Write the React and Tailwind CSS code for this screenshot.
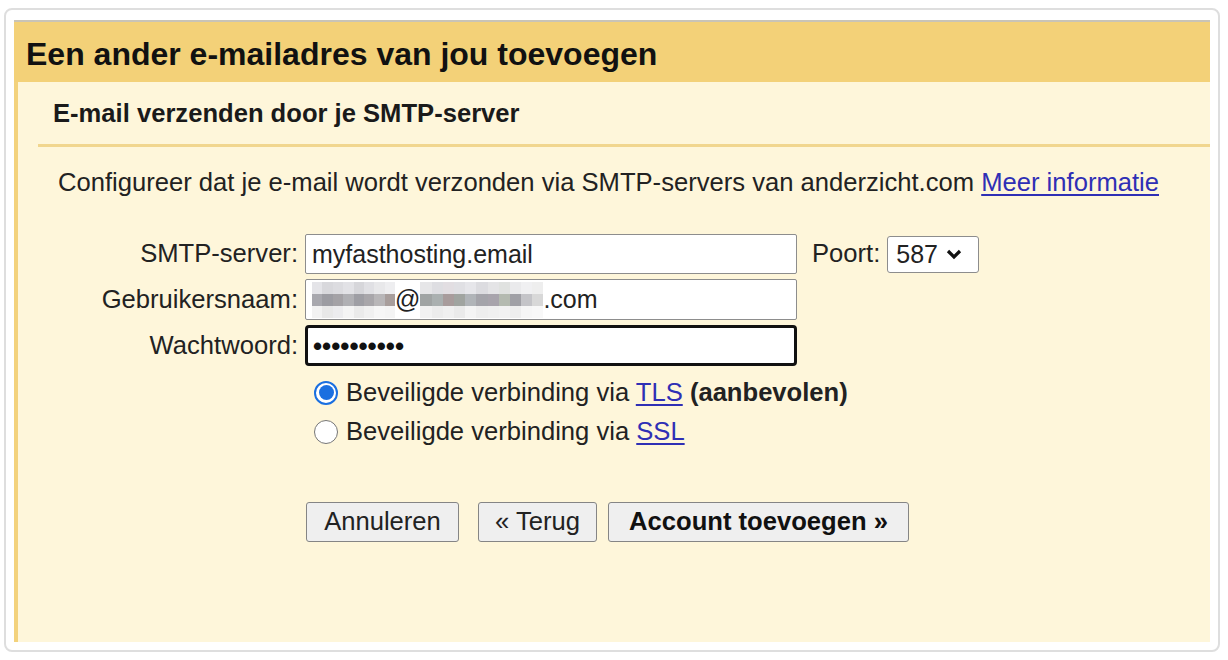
export default function App() {
  const mosaicA = [
    ["#e4e4e8", "#d8d8dc", "#dcdce0", "#e2e2e6", "#d6d6da", "#e0e0e4", "#e8e8ea", "#eeeef0"],
    ["#a8a8ae", "#9c9ca2", "#a4a2a6", "#b0b0b4", "#9e9ea4", "#a8a6aa", "#b8b6b8", "#a89e9c"],
    ["#f2f2f2", "#e8e8e8", "#ececee", "#f4f4f4", "#eaeaea", "#f0f0f0", "#f6f6f6", "#f4f4f4"],
  ];
  const mosaicB = [
    ["#e6e6e8", "#dedee2", "#e2dee2", "#e0e0e4", "#e6e6ea", "#dcdce0", "#e4e4e6", "#e0e2e0", "#eaeaec", "#f0f0f2", "#eeeeee"],
    ["#a0a4a4", "#aab0b0", "#a89c9c", "#a0a4a0", "#b0b4b8", "#a4a4aa", "#a8a4ac", "#b4bab0", "#a0a0a6", "#c4c4c8", "#d8d8d8"],
    ["#f2f2f2", "#ececec", "#f0f0f0", "#eaeaea", "#f4f4f4", "#eeeeee", "#f0f0f0", "#f2f2f2", "#eeeeee", "#f6f6f6", "#f8f8f8"],
  ];
  const Mosaic = ({ rows, w }) => (
    <div className="flex flex-col self-end mb-[1px]" style={{ width: w }}>
      {rows.map((r, i) => (
        <div key={i} className="flex h-[12px]">
          {r.map((c, j) => (
            <div key={j} className="flex-1" style={{ backgroundColor: c }} />
          ))}
        </div>
      ))}
    </div>
  );

  return (
    <div className="w-[1228px] h-[660px] bg-white font-['Liberation_Sans',Arial,sans-serif] text-[#222] pt-[8px] pl-[4px]">
      <div className="w-[1216px] h-[644px] border-2 border-[#dedede] rounded-[8px] pt-[10px] pl-[8px] pr-[8px] pb-[8px]">
        <div className="flex flex-col h-full">
          <div className="h-[2px] bg-[#c9c4b6]" />
          <div className="h-[60px] bg-[#f3d178] flex items-center pl-[12px] pt-[3px]">
            <div className="text-[32px] font-bold leading-none text-[#111]">
              Een ander e-mailadres van jou toevoegen
            </div>
          </div>
          <div className="flex-1 flex">
            <div className="w-[4px] bg-[#f3d27c]" />
            <div className="flex-1 bg-[#fef6da] pl-[20px]">
              <div className="h-[62px] flex items-center pl-[15px] pt-[1px]">
                <div className="text-[25.6px] font-bold leading-none text-[#1a1a1a]">
                  E-mail verzenden door je SMTP-server
                </div>
              </div>
              <div className="h-[3px] bg-[#f1d68e]" />
              <div className="pl-[20px] mt-[20px] text-[25.6px] leading-[30px]">
                Configureer dat je e-mail wordt verzonden via SMTP-servers van anderzicht.com{" "}
                <span className="text-[#2f2fb5] underline underline-offset-[3px]">Meer informatie</span>
              </div>

              <div className="mt-[37px] grid grid-cols-[260px_492px_auto] gap-x-[7px] gap-y-[5px] text-[25.6px]">
                <div className="flex items-center justify-end h-[40px] leading-none">SMTP-server:</div>
                <div className="h-[40px] border-[1.5px] border-[#8d8d8d] rounded-[2px] bg-white flex items-center pl-[6px] text-[25px] leading-none">
                  myfasthosting.email
                </div>
                <div className="flex items-center h-[40px] pl-[8px] gap-[7px]">
                  <span className="leading-none">Poort:</span>
                  <div className="w-[92px] h-[37px] border-[1.5px] border-[#8d8d8d] rounded-[3px] bg-white flex items-center pl-[8px] gap-[7px] text-[25px] leading-none">
                    <span>587</span>
                    <svg width="18" height="12" viewBox="0 0 18 12">
                      <path d="M3 3 L9 9 L15 3" fill="none" stroke="#111" strokeWidth="3.2" strokeLinejoin="miter" />
                    </svg>
                  </div>
                </div>

                <div className="flex items-center justify-end h-[41px] leading-none">Gebruikersnaam:</div>
                <div className="h-[41px] border-[1.5px] border-[#8d8d8d] rounded-[2px] bg-white flex items-stretch pl-[6px] text-[25px] leading-none">
                  <Mosaic rows={mosaicA} w={83} />
                  <span className="self-center">@</span>
                  <Mosaic rows={mosaicB} w={123} />
                  <span className="self-center">.com</span>
                </div>
                <div />

                <div className="flex items-center justify-end h-[41px] leading-none">Wachtwoord:</div>
                <div className="h-[41px] border-[3px] border-[#111] rounded-[4px] bg-white flex items-center pl-[5px] text-[26px] leading-none font-bold text-[#111]">
                  ••••••••••
                </div>
                <div />

                <div />
                <div className="col-span-2 pl-[9px] mt-[2px] flex flex-col">
                  <div className="h-[39px] flex items-center gap-[8px]">
                    <div className="w-[24px] h-[24px] rounded-full border-[2px] border-[#1a6fe0] bg-white flex items-center justify-center">
                      <div className="w-[15px] h-[15px] rounded-full bg-[#1a6fe0]" />
                    </div>
                    <span className="leading-none">
                      Beveiligde verbinding via{" "}
                      <span className="text-[#2f2fb5] underline underline-offset-[3px]">TLS</span>{" "}
                      <span className="font-bold">(aanbevolen)</span>
                    </span>
                  </div>
                  <div className="h-[39px] flex items-center gap-[8px]">
                    <div className="w-[24px] h-[24px] rounded-full border-[1.5px] border-[#767676] bg-white" />
                    <span className="leading-none">
                      Beveiligde verbinding via{" "}
                      <span className="text-[#2f2fb5] underline underline-offset-[3px]">SSL</span>
                    </span>
                  </div>
                </div>

                <div />
                <div className="col-span-2 mt-[46px] flex pl-[1px]">
                  <div className="w-[153px] h-[40px] border-[1.5px] border-[#858585] rounded-[3px] bg-[#efefef] flex items-center justify-center leading-none">
                    Annuleren
                  </div>
                  <div className="ml-[19px] w-[119px] h-[40px] border-[1.5px] border-[#858585] rounded-[3px] bg-[#efefef] flex items-center justify-center leading-none">
                    « Terug
                  </div>
                  <div className="ml-[11px] w-[301px] h-[40px] border-[1.5px] border-[#858585] rounded-[3px] bg-[#efefef] flex items-center justify-center leading-none font-bold text-[#111]">
                    Account toevoegen »
                  </div>
                </div>
              </div>
            </div>
          </div>
        </div>
      </div>
    </div>
  );
}
